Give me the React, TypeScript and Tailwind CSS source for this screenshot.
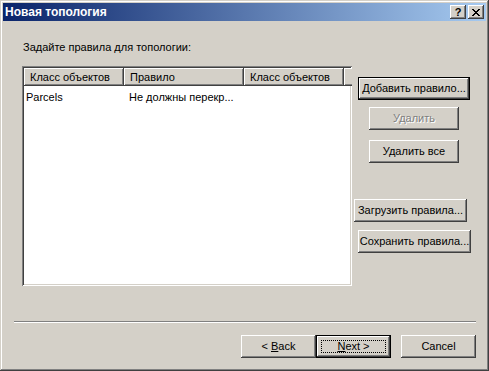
import React from "react";

const raised =
  "shadow-[inset_-1px_-1px_#404040,inset_1px_1px_#ffffff,inset_-2px_-2px_#808080,inset_2px_2px_#d4d0c8]";

function Btn({
  children,
  className = "",
  disabled = false,
  isDefault = false,
  focus = false,
}: {
  children: React.ReactNode;
  className?: string;
  disabled?: boolean;
  isDefault?: boolean;
  focus?: boolean;
}) {
  const inner = (
    <div
      className={`w-full h-full flex items-center justify-center bg-[#d4d0c8] ${raised} ${
        disabled ? "text-[#808080] [text-shadow:1px_1px_0_#ffffff]" : "text-black"
      }`}
    >
      {focus ? (
        <div className="w-[calc(100%-8px)] h-[calc(100%-8px)] border border-dotted border-black flex items-center justify-center">
          {children}
        </div>
      ) : (
        children
      )}
    </div>
  );
  return (
    <div
      className={`${className} ${isDefault ? "border border-black" : ""} text-[11px] leading-[13px] shrink-0`}
    >
      {inner}
    </div>
  );
}

function HeaderCell({ w, children }: { w: number; children?: React.ReactNode }) {
  return (
    <div
      className={`h-[18px] bg-[#d4d0c8] ${raised} flex items-center pl-[6px] text-[11px] shrink-0 overflow-hidden whitespace-nowrap`}
      style={{ width: w }}
    >
      {children}
    </div>
  );
}

export default function App() {
  return (
    <div
      className="w-[489px] h-[371px] bg-[#d4d0c8] p-[3px] flex flex-col shadow-[inset_-1px_-1px_#404040,inset_1px_1px_#d4d0c8,inset_-2px_-2px_#808080,inset_2px_2px_#ffffff] overflow-hidden"
      style={{ fontFamily: '"Liberation Sans", Arial, sans-serif' }}
    >
      {/* Title bar */}
      <div className="h-[18px] shrink-0 flex items-center bg-[linear-gradient(to_right,#0a246a,#a6caf0)] pl-[2px] pr-[2px]">
        <div className="text-white font-bold text-[12px] leading-[14px] flex-1 whitespace-nowrap">
          Новая топология
        </div>
        <div className={`w-[16px] h-[14px] bg-[#d4d0c8] ${raised} flex items-center justify-center`}>
          <span className="font-bold text-[11px] leading-[11px] text-black mt-[1px]">?</span>
        </div>
        <div className={`w-[16px] h-[14px] ml-[2px] bg-[#d4d0c8] ${raised} flex items-center justify-center`}>
          <svg width="8" height="7" viewBox="0 0 8 7" shapeRendering="crispEdges">
            <path
              fill="#000"
              d="M0 0h2v1H0zM6 0h2v1H6zM1 1h2v1H1zM5 1h2v1H5zM2 2h4v1H2zM3 3h2v1H3zM2 4h4v1H2zM1 5h2v1H1zM5 5h2v1H5zM0 6h2v1H0zM6 6h2v1H6z"
            />
          </svg>
        </div>
      </div>

      {/* Client */}
      <div className="flex flex-col text-[11px] text-black">
        <div className="mt-[19px] pl-[20px] leading-[14px] h-[14px] whitespace-nowrap">
          Задайте правила для топологии:
        </div>

        <div className="flex mt-[12px]">
          {/* List view */}
          <div className="ml-[19px] w-[330px] h-[220px] bg-white shrink-0 p-[2px] shadow-[inset_1px_1px_#808080,inset_-1px_-1px_#ffffff,inset_2px_2px_#404040,inset_-2px_-2px_#d4d0c8] flex flex-col overflow-hidden">
            <div className="flex">
              <HeaderCell w={100}>Класс объектов</HeaderCell>
              <HeaderCell w={120}>Правило</HeaderCell>
              <HeaderCell w={100}>Класс объектов</HeaderCell>
              <HeaderCell w={10} />
            </div>
            <div className="flex h-[14px] mt-[4px] items-center whitespace-nowrap">
              <div className="w-[100px] pl-[2px]">Parcels</div>
              <div className="w-[120px] pl-[5px]">Не должны перекр...</div>
            </div>
          </div>

          {/* Right buttons */}
          <div className="flex flex-col items-start">
            <Btn isDefault className="ml-[6px] mt-[11px] w-[112px] h-[23px]">
              Добавить правило...
            </Btn>
            <Btn disabled className="ml-[17px] mt-[7px] w-[90px] h-[23px]">
              Удалить
            </Btn>
            <Btn className="ml-[17px] mt-[10px] w-[90px] h-[23px]">Удалить все</Btn>
            <Btn className="ml-[2px] mt-[36px] w-[113px] h-[23px]">Загрузить правила...</Btn>
            <Btn className="ml-[6px] mt-[8px] w-[113px] h-[23px]">Сохранить правила...</Btn>
          </div>
        </div>

        {/* Separator */}
        <div className="ml-[11px] mt-[35px] w-[462px] h-[2px] border-t border-t-[#808080] border-b border-b-white" />

        {/* Bottom buttons */}
        <div className="flex mt-[12px] ml-[238px]">
          <Btn className="w-[75px] h-[23px]">
            <span>
              &lt; <u>B</u>ack
            </span>
          </Btn>
          <Btn isDefault focus className="w-[75px] h-[23px]">
            <span>
              <u>N</u>ext &gt;
            </span>
          </Btn>
          <Btn className="ml-[10px] w-[75px] h-[23px]">Cancel</Btn>
        </div>
      </div>
    </div>
  );
}
